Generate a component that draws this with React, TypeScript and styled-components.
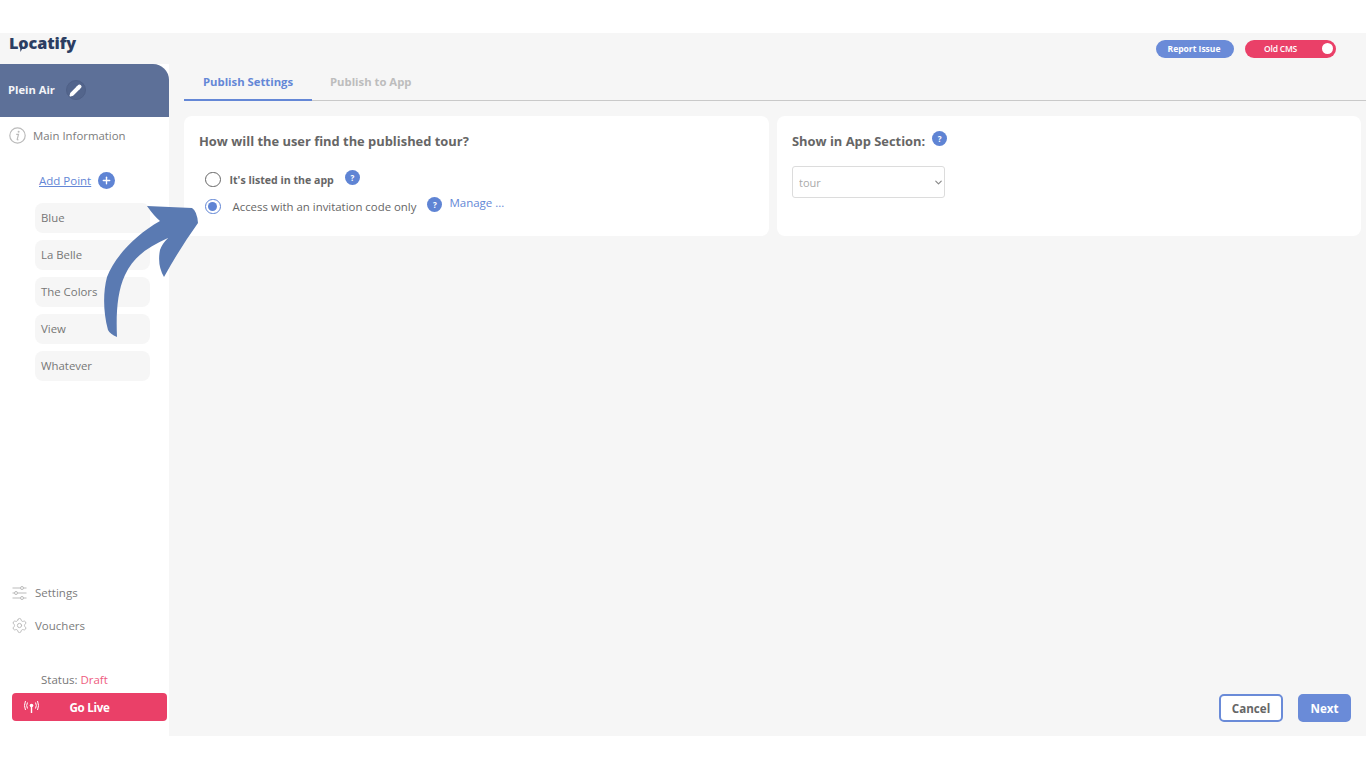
import React from 'react';
import styled, { createGlobalStyle } from 'styled-components';
import { Pencil, Plus, Settings, ChevronDown } from 'lucide-react';

const GlobalStyle = createGlobalStyle`
  html, body { margin: 0; padding: 0; background: #fff; }
  * { box-sizing: border-box; }
  body { font-family: "Open Sans", "Liberation Sans", sans-serif; color: #666; }
`;

const Page = styled.div`
  position: relative;
  width: 1366px;
  height: 768px;
  padding: 33px 0 32px;
  overflow: hidden;
`;

const Shell = styled.div`
  display: flex;
  height: 703px;
  background: #f6f6f6;
`;

const Sidebar = styled.aside`
  width: 169px;
  flex-shrink: 0;
  display: flex;
  flex-direction: column;
`;

const LogoRow = styled.div`
  position: relative;
  height: 31px;
  padding-left: 9px;
  font-size: 16.2px;
  font-weight: 800;
  line-height: 20px;
  color: #2c3e63;
  letter-spacing: -0.1px;
`;

const LogoTail = styled.svg`
  position: absolute;
  left: 19px;
  top: 14px;
`;

const SideBody = styled.div`
  flex: 1;
  display: flex;
  flex-direction: column;
  background: #fff;
`;

const TourHead = styled.div`
  height: 53px;
  display: flex;
  align-items: center;
  gap: 11px;
  padding: 0 0 1px 8px;
  background: #5d7098;
  border-top-right-radius: 16px;
  color: #f4f5f8;
  font-size: 11.2px;
  font-weight: 700;
  line-height: 18px;
`;

const EditBadge = styled.span`
  width: 20px;
  height: 20px;
  border-radius: 50%;
  display: flex;
  align-items: center;
  justify-content: center;
  background: #53658c;
  border: 1px solid #4f6087;
`;

const MainInfo = styled.div`
  display: flex;
  align-items: center;
  gap: 7px;
  height: 37px;
  padding-left: 9px;
  font-size: 11.4px;
  color: #7c7c7c;
`;

const PointList = styled.div`
  display: flex;
  flex-direction: column;
  gap: 7px;
  padding: 16px 19px 0 35px;
`;

const AddRow = styled.div`
  display: flex;
  align-items: center;
  gap: 7px;
  height: 20px;
  padding-left: 4px;
  margin-bottom: 6px;
  font-size: 11.5px;
`;

const AddLink = styled.a`
  color: #6487d6;
  text-decoration: underline;
`;

const PlusBadge = styled.span`
  width: 17px;
  height: 17px;
  border-radius: 50%;
  background: #5f84d4;
  display: flex;
  align-items: center;
  justify-content: center;
`;

const PointItem = styled.div`
  height: 30px;
  display: flex;
  align-items: center;
  padding: 0 0 1px 6px;
  border-radius: 8px;
  background: #f6f6f6;
  font-size: 11.4px;
  color: #777;
`;

const SideFooter = styled.div`
  margin-top: auto;
  display: flex;
  flex-direction: column;
  padding-bottom: 15px;
`;

const FooterLink = styled.div`
  height: 33px;
  display: flex;
  align-items: center;
  gap: 7px;
  padding-left: 11px;
  font-size: 11.5px;
  color: #7c7c7c;
`;

const Status = styled.div`
  margin-top: 28px;
  padding-left: 41px;
  height: 20px;
  line-height: 20px;
  font-size: 11.5px;
  color: #777;
`;

const Draft = styled.span`
  color: #ee5c80;
`;

const GoLive = styled.button`
  position: relative;
  width: 155px;
  height: 28px;
  margin: 3px 0 0 12px;
  border: 0;
  border-radius: 4px;
  background: #ea4068;
  color: #fff;
  font-family: inherit;
  font-size: 11.6px;
  font-weight: 700;
  letter-spacing: -0.3px;
  padding: 0;
`;

const LiveIcon = styled.svg`
  position: absolute;
  left: 12px;
  top: 7px;
`;

const Main = styled.main`
  flex: 1;
  display: flex;
  flex-direction: column;
  min-width: 0;
`;

const TopBar = styled.div`
  height: 31px;
  display: flex;
  justify-content: flex-end;
  align-items: flex-start;
  gap: 11px;
  padding: 7px 30px 0 0;
`;

const ReportButton = styled.button`
  width: 78px;
  height: 18px;
  border: 0;
  border-radius: 9px;
  background: #6a8bd8;
  color: #fff;
  font-family: inherit;
  font-size: 8.5px;
  font-weight: 700;
  padding: 0 2px 1px 0;
`;

const CmsToggle = styled.div`
  position: relative;
  width: 91px;
  height: 18px;
  border-radius: 9px;
  background: #ea4068;
  color: #fff;
  font-size: 8.5px;
  font-weight: 600;
  letter-spacing: -0.2px;
  line-height: 18px;
  padding-left: 19px;
`;

const ToggleKnob = styled.span`
  position: absolute;
  right: 3px;
  top: 3px;
  width: 11px;
  height: 11px;
  border-radius: 50%;
  background: #fff;
`;

const Tabs = styled.div`
  height: 37px;
  margin-left: 15px;
  display: flex;
  border-bottom: 1px solid #c9c9c9;
`;

const Tab = styled.div<{ $active?: boolean }>`
  height: 37px;
  width: ${p => (p.$active ? '128px' : 'auto')};
  padding: 9px 0 0 ${p => (p.$active ? '19px' : '18px')};
  font-size: 11.3px;
  font-weight: 700;
  line-height: 17px;
  color: ${p => (p.$active ? '#6487d6' : '#bdbdbd')};
  border-bottom: ${p => (p.$active ? '2px solid #6487d6' : '0')};
`;

const Cards = styled.div`
  display: flex;
  gap: 8px;
  padding: 15px 5px 0 15px;
`;

const Card = styled.section<{ $wide?: boolean }>`
  height: 120px;
  flex: ${p => (p.$wide ? '0 0 585px' : '1')};
  border-radius: 8px;
  background: #fff;
  padding: 15px;
`;

const CardTitle = styled.h2`
  margin: 0;
  display: flex;
  align-items: flex-start;
  gap: 7px;
  font-size: 12.9px;
  font-weight: 700;
  line-height: 20px;
  color: #666;
`;

const RadioGroup = styled.div`
  margin-top: 15px;
`;

const RadioRow = styled.div`
  display: flex;
  align-items: center;
  height: 27px;
  padding-left: 6px;
  color: #666;
`;

const Radio = styled.span<{ $checked?: boolean }>`
  width: 15.5px;
  height: 15.5px;
  border-radius: 50%;
  flex-shrink: 0;
  border: ${p => (p.$checked ? '1.5px solid #5f84d4' : '1.5px solid #666')};
  display: flex;
  align-items: center;
  justify-content: center;
  &::after {
    content: '';
    display: ${p => (p.$checked ? 'block' : 'none')};
    width: 9px;
    height: 9px;
    border-radius: 50%;
    background: #5f84d4;
  }
`;

const RadioLabel = styled.span<{ $strong?: boolean }>`
  margin-left: ${p => (p.$strong ? '9px' : '12px')};
  font-size: ${p => (p.$strong ? '10.6px' : '11.4px')};
  font-weight: ${p => (p.$strong ? 700 : 400)};
`;

const Help = styled.span<{ $left?: number; $up?: number }>`
  width: 15px;
  height: 15px;
  flex-shrink: 0;
  border-radius: 50%;
  background: #5f84d4;
  color: #fff;
  font-size: 8px;
  font-weight: 700;
  display: inline-flex;
  align-items: center;
  justify-content: center;
  margin-left: ${p => p.$left ?? 0}px;
  transform: translateY(-${p => p.$up ?? 0}px);
`;

const Manage = styled.a`
  margin-left: 7px;
  font-size: 11.5px;
  color: #6487d6;
  transform: translateY(-4px);
`;

const SelectWrap = styled.div`
  position: relative;
  width: 153px;
  margin-top: 15px;
`;

const SectionSelect = styled.select`
  display: block;
  width: 100%;
  height: 32px;
  padding-left: 6px;
  border: 1px solid #dcdcdc;
  border-radius: 3px;
  background: #fff;
  color: #aaa;
  font-family: inherit;
  font-size: 11px;
  appearance: none;
`;

const SelectChevron = styled.span`
  position: absolute;
  right: 1px;
  top: 11px;
  display: flex;
  pointer-events: none;
`;

const Actions = styled.div`
  margin-top: auto;
  display: flex;
  justify-content: flex-end;
  gap: 15px;
  padding: 0 15px 14px 0;
`;

const ActionButton = styled.button<{ $primary?: boolean }>`
  height: 28px;
  width: ${p => (p.$primary ? '53px' : '64px')};
  border-radius: 5px;
  border: 2px solid #6a8bd8;
  background: ${p => (p.$primary ? '#6a8bd8' : '#fff')};
  color: ${p => (p.$primary ? '#fff' : '#666')};
  font-family: inherit;
  font-size: 11.6px;
  font-weight: 700;
  padding: 0;
`;

const Arrow = styled.svg`
  position: absolute;
  left: 100px;
  top: 200px;
`;

const points = ['Blue', 'La Belle', 'The Colors', 'View', 'Whatever'];

const App: React.FC = () => {
  return (
    <Page>
      <GlobalStyle />
      <Shell>
        <Sidebar>
          <LogoRow>
            Locatify
            <LogoTail width="6" height="6" viewBox="0 0 6 6">
              <path d="M1 0 L4 0 L1.5 5 Z" fill="#2c3e63" />
            </LogoTail>
          </LogoRow>
          <SideBody>
            <TourHead>
              Plein Air
              <EditBadge><Pencil size={13} color="#fff" fill="#fff" /></EditBadge>
            </TourHead>
            <MainInfo>
              <svg width="17" height="17" viewBox="0 0 17 17" fill="none">
                <circle cx="8.5" cy="8.5" r="7.7" stroke="#bbb" strokeWidth="1.2" />
                <circle cx="9.6" cy="4.7" r="1" fill="#bbb" />
                <path d="M7.2 7.4 H9.5 L8.2 12.4 Q8.1 13 9.4 12.7" stroke="#bbb" strokeWidth="1.2" />
              </svg>
              Main Information
            </MainInfo>
            <PointList>
              <AddRow>
                <AddLink>Add Point</AddLink>
                <PlusBadge><Plus size={11} color="#fff" strokeWidth={3} /></PlusBadge>
              </AddRow>
              {points.map(p => <PointItem key={p}>{p}</PointItem>)}
            </PointList>
            <SideFooter>
              <FooterLink>
                <svg width="17" height="16" viewBox="0 0 17 16" fill="none" stroke="#bbb" strokeWidth="1">
                  <path d="M1.5 3 H9.5 M12.5 3 H15.5 M1.5 8 H3.5 M6.5 8 H15.5 M1.5 13 H9.5 M12.5 13 H15.5" />
                  <circle cx="11" cy="3" r="1.5" />
                  <circle cx="5" cy="8" r="1.5" />
                  <circle cx="11" cy="13" r="1.5" />
                </svg>
                Settings
              </FooterLink>
              <FooterLink>
                <Settings size={17} color="#bbb" strokeWidth={1.4} />
                Vouchers
              </FooterLink>
              <Status>Status: <Draft>Draft</Draft></Status>
              <GoLive>
                <LiveIcon width="15" height="14" viewBox="0 0 15 14" fill="none" stroke="#fff" strokeWidth="1">
                  <path d="M3.5 2.5 Q1.8 5.5 3.5 8.5 M1.5 1 Q-0.6 5.5 1.5 10 M11.5 2.5 Q13.2 5.5 11.5 8.5 M13.5 1 Q15.6 5.5 13.5 10" />
                  <circle cx="7.5" cy="5.5" r="1.8" fill="#fff" stroke="none" />
                  <path d="M7.5 6 V13" strokeWidth="1.4" />
                </LiveIcon>
                Go Live
              </GoLive>
            </SideFooter>
          </SideBody>
        </Sidebar>
        <Main>
          <TopBar>
            <ReportButton>Report Issue</ReportButton>
            <CmsToggle>Old CMS<ToggleKnob /></CmsToggle>
          </TopBar>
          <Tabs>
            <Tab $active>Publish Settings</Tab>
            <Tab>Publish to App</Tab>
          </Tabs>
          <Cards>
            <Card $wide>
              <CardTitle>How will the user find the published tour?</CardTitle>
              <RadioGroup>
                <RadioRow>
                  <Radio />
                  <RadioLabel $strong>It's listed in the app</RadioLabel>
                  <Help $left={11} $up={2}>?</Help>
                </RadioRow>
                <RadioRow>
                  <Radio $checked />
                  <RadioLabel>Access with an invitation code only</RadioLabel>
                  <Help $left={11} $up={2}>?</Help>
                  <Manage>Manage ...</Manage>
                </RadioRow>
              </RadioGroup>
            </Card>
            <Card>
              <CardTitle>Show in App Section: <Help>?</Help></CardTitle>
              <SelectWrap>
                <SectionSelect defaultValue="tour">
                  <option value="tour">tour</option>
                </SectionSelect>
                <SelectChevron><ChevronDown size={11} color="#888" strokeWidth={2.5} /></SelectChevron>
              </SelectWrap>
            </Card>
          </Cards>
          <Actions>
            <ActionButton>Cancel</ActionButton>
            <ActionButton $primary>Next</ActionButton>
          </Actions>
        </Main>
      </Shell>
      <Arrow width="100" height="140" viewBox="0 0 100 140">
        <path
          fill="#5a7ab2"
          d="M47 6 L92 8 Q97 11 98 23 Q80 48 64 77 Q57 65 60 50 Q62 44 68 38 C48 47 33 57 25 75 C17 92 16 115 17 137 Q10 134 8 130 C3 112 3 92 7 77 C14 58 35 35 60 21 Q54 16 47 6 Z"
        />
      </Arrow>
    </Page>
  );
};

export default App;
